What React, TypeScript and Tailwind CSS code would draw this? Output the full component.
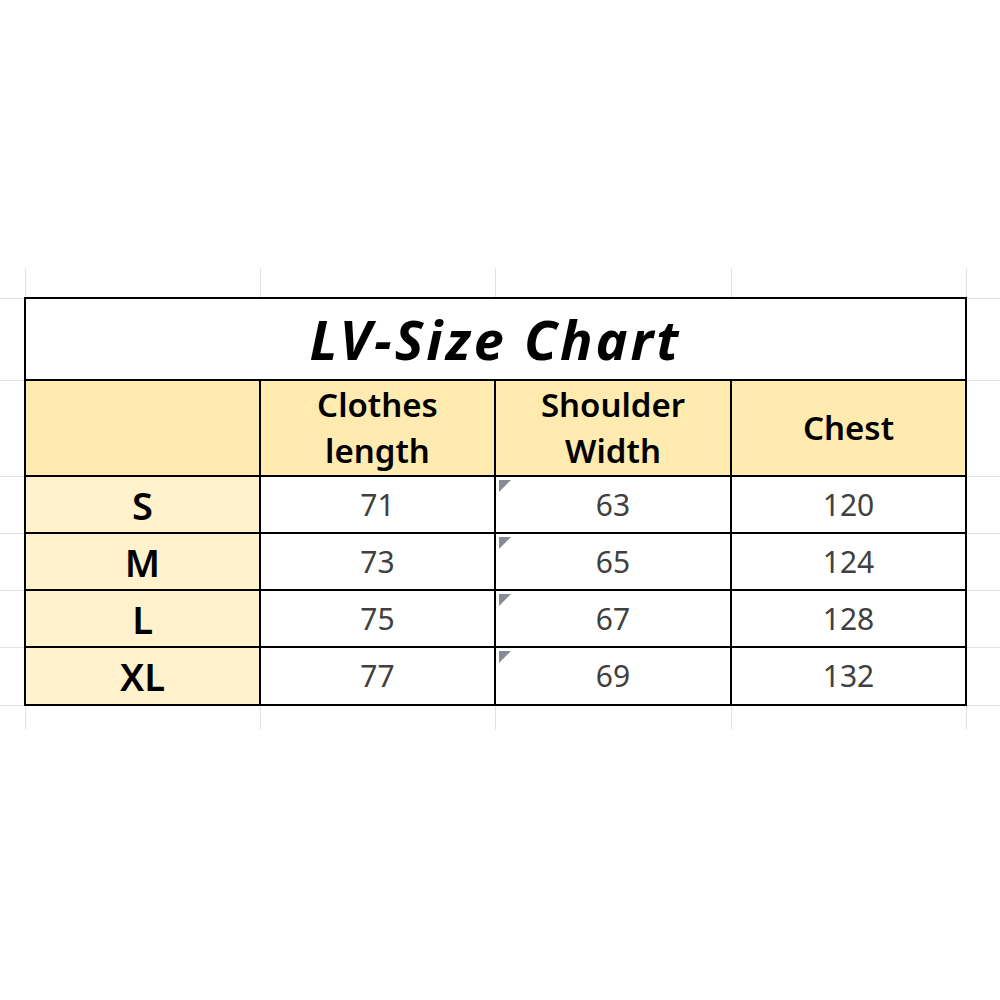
const ROWS = [
  { size: 'S', length: 71, shoulder: 63, chest: 120 },
  { size: 'M', length: 73, shoulder: 65, chest: 124 },
  { size: 'L', length: 75, shoulder: 67, chest: 128 },
  { size: 'XL', length: 77, shoulder: 69, chest: 132 },
]

const grid = 'border-[#e1e1e6]'

/** Light spreadsheet gridline stubs above / below the bordered block. */
function GridStub({ h }: { h: string }) {
  return (
    <tr className={h}>
      <td className="w-[25px] p-0" />
      <td className={`w-[235px] border-l ${grid} p-0`} />
      <td className={`w-[235px] border-l ${grid} p-0`} />
      <td className={`w-[236px] border-l ${grid} p-0`} />
      <td className={`w-[235px] border-l border-r ${grid} p-0`} />
      <td className="p-0" />
    </tr>
  )
}

export default function App() {
  return (
    <div
      className="h-[1000px] w-[1000px] overflow-hidden bg-white pt-[268px]"
      style={{ fontFamily: '"Noto Sans", "Open Sans", sans-serif' }}
    >
      <table className="w-[1000px] table-fixed border-collapse">
        <colgroup>
          <col className="w-[25px]" />
          <col className="w-[235px]" />
          <col className="w-[235px]" />
          <col className="w-[236px]" />
          <col className="w-[235px]" />
          <col />
        </colgroup>
        <tbody>
          <GridStub h="h-[30px]" />

          {/* Title */}
          <tr className="h-[82px]">
            <td className={`border-t border-b ${grid} p-0`} />
            <td
              colSpan={4}
              className="border-2 border-black p-0 text-center text-[54px] font-bold italic leading-none tracking-[3px] text-black"
            >
              LV-Size Chart
            </td>
            <td className={`border-t border-b ${grid} p-0`} />
          </tr>

          {/* Header */}
          <tr className="h-[96px]">
            <td className={`border-b ${grid} p-0`} />
            <td className="border-2 border-black bg-[#ffebaf] p-0" />
            {['Clothes length', 'Shoulder Width', 'Chest'].map((h) => (
              <td
                key={h}
                className="border-2 border-black bg-[#ffebaf] p-0 text-center text-[33px] font-semibold leading-[46px] text-black"
              >
                {h.includes(' ') ? (
                  <>
                    {h.split(' ')[0]}
                    <br />
                    {h.split(' ')[1]}
                  </>
                ) : (
                  h
                )}
              </td>
            ))}
            <td className={`border-b ${grid} p-0`} />
          </tr>

          {ROWS.map((r, i) => (
            <tr key={r.size} className={i === 3 ? 'h-[58px]' : 'h-[57px]'}>
              <td className={`border-b ${grid} p-0`} />
              <td className="border-2 border-black bg-[#fff2cc] p-0 text-center text-[38px] font-semibold leading-none text-black">
                {r.size}
              </td>
              <td className="border-2 border-black p-0 text-center text-[30px] leading-none text-[#404040]">
                {r.length}
              </td>
              <td className="relative border-2 border-black p-0 text-center text-[30px] leading-none text-[#404040]">
                <span className="absolute left-[3px] top-[3px] h-0 w-0 border-r-[12px] border-t-[12px] border-r-transparent border-t-[#878b94]" />
                {r.shoulder}
              </td>
              <td className="border-2 border-black p-0 text-center text-[30px] leading-none text-[#404040]">
                {r.chest}
              </td>
              <td className={`border-b ${grid} p-0`} />
            </tr>
          ))}

          <GridStub h="h-[25px]" />
        </tbody>
      </table>
    </div>
  )
}
